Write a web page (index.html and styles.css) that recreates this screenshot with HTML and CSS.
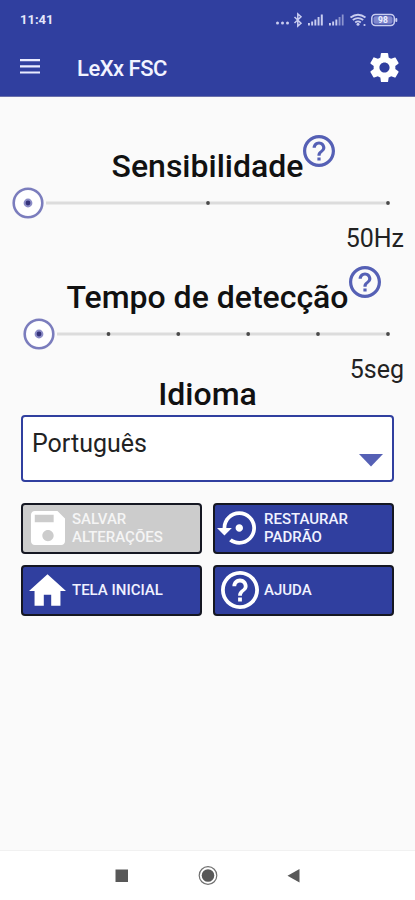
FILE: index.html
```html
<!DOCTYPE html>
<html lang="pt">
<head>
    <meta charset="UTF-8">
    <meta name="viewport" content="width=device-width, initial-scale=1.0">
    <title>LeXx FSC</title>
    <link rel="stylesheet" href="styles.css">
</head>
<body>
    <svg class="defs" aria-hidden="true">
        <symbol id="icon-help" viewBox="2 2 20 20">
            <path d="M11 18h2v-2h-2v2zm1-16C6.48 2 2 6.48 2 12s4.48 10 10 10 10-4.48 10-10S17.52 2 12 2zm0 18c-4.41 0-8-3.59-8-8s3.59-8 8-8 8 3.59 8 8-3.59 8-8 8zm0-14c-2.21 0-4 1.79-4 4h2c0-1.1.9-2 2-2s2 .9 2 2c0 2-3 1.75-3 5h2c0-2.25 3-2.5 3-5 0-2.21-1.79-4-4-4z"/>
        </symbol>
    </svg>

    <header class="app-header">
        <div class="status-bar">
            <span class="clock">11:41</span>
            <svg class="status-icons" width="124" height="16" viewBox="0 0 124 16">
                <g fill="#c9cdf0">
                    <circle cx="2.5" cy="11" r="1.5"/>
                    <circle cx="7.5" cy="11" r="1.5"/>
                    <circle cx="12.5" cy="11" r="1.5"/>
                    <path d="M33 11h1.9v2.5H33zM36.2 9.5h1.9v4h-1.9zM39.4 7.5h1.9v6h-1.9zM42.6 5h1.9v8.5h-1.9zM45.8 2.5h2v11h-2z"/>
                    <path d="M54 11h1.9v2.5H54zM57.2 9.5h1.9v4h-1.9zM60.4 7.5h1.9v6h-1.9z"/>
                    <path opacity=".6" d="M63.6 5h1.9v8.5h-1.9zM66.8 2.5h1.8v11h-1.8z"/>
                    <circle cx="83" cy="12.3" r="1.5"/>
                    <circle cx="89.5" cy="13" r="1.1"/>
                    <rect x="120.3" y="6" width="2" height="4" rx="1"/>
                </g>
                <g fill="none" stroke="#c9cdf0">
                    <path stroke-width="1.5" d="M19.5 5l6.500 6.2-3.200 2.800V2l3.200 2.800-6.500 6.2"/>
                    <path stroke-width="1.9" d="M75.500 5.600q7.500-5.600 15 0M77.800 8.100q5.200-3.900 10.400 0M80.200 10.400q2.800-2.100 5.600 0"/>
                    <rect x="96.8" y="2.5" width="22.5" height="11" rx="3.5" stroke-width="1.5"/>
                </g>
                <rect x="98.5" y="4.2" width="19" height="7.6" rx="2" fill="#7f87cd"/>
                <text x="108" y="11.2" class="battery-level">98</text>
            </svg>
        </div>
        <div class="toolbar">
            <svg class="menu-icon" width="20" height="15" viewBox="0 0 20 15">
                <path d="M0 0h20v2.2H0zM0 6.2h20v2.2H0zM0 12.4h20v2.2H0z" fill="#e9ebff"/>
            </svg>
            <h1 class="app-title">LeXx FSC</h1>
            <svg class="settings-icon" width="29" height="29" viewBox="2 2 20 20">
                <path fill="#fff" d="M19.43 12.98c.04-.32.07-.64.07-.98s-.03-.66-.07-.98l2.11-1.65c.19-.15.24-.42.12-.64l-2-3.46c-.12-.22-.39-.3-.61-.22l-2.49 1c-.52-.4-1.08-.73-1.69-.98l-.38-2.65C14.46 2.18 14.25 2 14 2h-4c-.25 0-.46.18-.49.42l-.38 2.65c-.61.25-1.17.59-1.69.98l-2.49-1c-.23-.09-.49 0-.61.22l-2 3.46c-.13.22-.07.49.12.64l2.11 1.65c-.04.32-.07.65-.07.98s.03.66.07.98l-2.11 1.65c-.19.15-.24.42-.12.64l2 3.46c.12.22.39.3.61.22l2.49-1c.52.4 1.08.73 1.69.98l.38 2.65c.03.24.24.42.49.42h4c.25 0 .46-.18.49-.42l.38-2.65c.61-.25 1.17-.59 1.69-.98l2.49 1c.23.09.49 0 .61-.22l2-3.46c.12-.22.07-.49-.12-.64l-2.11-1.65zM12 15.5c-1.93 0-3.5-1.57-3.5-3.5s1.57-3.5 3.5-3.5 3.5 1.57 3.5 3.5-1.57 3.5-3.5 3.5z"/>
            </svg>
        </div>
    </header>

    <main class="settings">
        <section class="setting">
            <div class="setting-title">
                <h2>Sensibilidade</h2>
                <svg class="help"><use href="#icon-help"/></svg>
            </div>
            <svg class="slider" viewBox="0 0 415 34">
                <path class="rail" d="M46 17h342"/>
                <g class="ticks">
                    <circle cx="208" cy="17" r="1.9"/>
                    <circle cx="388" cy="17" r="1.9"/>
                </g>
                <circle class="thumb" cx="28" cy="17" r="14.3"/>
                <circle class="thumb-center" cx="28" cy="17" r="3.4"/>
            </svg>
            <p class="value">50Hz</p>
        </section>

        <section class="setting">
            <div class="setting-title">
                <h2>Tempo de detecção</h2>
                <svg class="help"><use href="#icon-help"/></svg>
            </div>
            <svg class="slider" viewBox="0 0 415 34">
                <path class="rail" d="M57 17h331"/>
                <g class="ticks">
                    <circle cx="108.5" cy="17" r="1.9"/>
                    <circle cx="178.3" cy="17" r="1.9"/>
                    <circle cx="248.2" cy="17" r="1.9"/>
                    <circle cx="318" cy="17" r="1.9"/>
                    <circle cx="388" cy="17" r="1.9"/>
                </g>
                <circle class="thumb" cx="39" cy="17" r="14.3"/>
                <circle class="thumb-center" cx="39" cy="17" r="3.4"/>
            </svg>
            <p class="value">5seg</p>
        </section>

        <section class="language">
            <h2 class="language-title">Idioma</h2>
            <div class="select">
                <span class="select-text">Português</span>
                <svg class="arrow" width="24" height="13" viewBox="0 0 24 13"><path d="M0 0h24L12 12.5z"/></svg>
            </div>
        </section>

        <div class="actions">
            <button class="action" disabled>
                <svg class="action-icon" width="34" height="34" viewBox="3 3 18 18">
                    <path d="M17 3H5c-1.11 0-2 .9-2 2v14c0 1.1.89 2 2 2h14c1.1 0 2-.9 2-2V7l-4-4zm-5 16c-1.66 0-3-1.34-3-3s1.34-3 3-3 3 1.34 3 3-1.34 3-3 3zm3-10H5V5h10v4z"/>
                </svg>
                <span>SALVAR<br>ALTERAÇÕES</span>
            </button>
            <button class="action">
                <svg class="action-icon restore" width="39" height="34" viewBox="0 3 21 18">
                    <path d="M14 12c0-1.1-.9-2-2-2s-2 .9-2 2 .9 2 2 2 2-.9 2-2zm-2-9c-4.97 0-9 4.03-9 9H0l4 4 4-4H5c0-3.87 3.13-7 7-7s7 3.13 7 7-3.13 7-7 7c-1.51 0-2.91-.49-4.06-1.3l-1.42 1.44C8.04 20.3 9.94 21 12 21c4.97 0 9-4.03 9-9s-4.03-9-9-9z"/>
                </svg>
                <span>RESTAURAR<br>PADRÃO</span>
            </button>
            <button class="action">
                <svg class="action-icon" width="37" height="32" viewBox="2 3 20 17">
                    <path d="M10 20v-6h4v6h5v-8h3L12 3 2 12h3v8z"/>
                </svg>
                <span>TELA INICIAL</span>
            </button>
            <button class="action">
                <svg class="action-icon" width="38" height="38"><use href="#icon-help"/></svg>
                <span>AJUDA</span>
            </button>
        </div>
    </main>

    <nav class="system-nav">
        <svg width="22" height="22" viewBox="0 0 22 22"><path d="M4.500 4.500h12.500v12.500h-12.500z"/></svg>
        <svg width="22" height="22" viewBox="0 0 22 22">
            <circle cx="11" cy="10.5" r="6.3"/>
            <circle class="ring" cx="11" cy="10.5" r="8.800"/>
        </svg>
        <svg width="22" height="22" viewBox="0 0 22 22"><path d="M16.500 4v13.500L4.500 10.700z"/></svg>
    </nav>
</body>
</html>
```
FILE: styles.css
```css
:root {
    --primary: #303f9f;
    --accent: #5560b5;
    --background: #fafafa;
}

* {
    box-sizing: border-box;
}

body {
    display: flex;
    flex-direction: column;
    height: 900px;
    margin: 0;
    overflow: hidden;
    background: var(--background);
    color: #111;
    font-family: Roboto, sans-serif;
}

h1, h2, p {
    margin: 0;
    font-weight: 500;
    white-space: nowrap;
}

svg {
    display: block;
    flex: none;
}

.defs {
    position: absolute;
    width: 0;
    height: 0;
}

/* Header */
.app-header {
    height: 97px;
    background: var(--primary);
    border-bottom: 1px solid #6a70aa;
}

.status-bar {
    display: flex;
    justify-content: space-between;
    align-items: center;
    height: 39px;
    padding: 0 16px 0 20px;
}

.clock {
    color: #e4e6fb;
    font-size: 13px;
    font-weight: 700;
}

.battery-level {
    fill: #eef0ff;
    font-size: 8.5px;
    font-weight: 700;
    text-anchor: middle;
}

.toolbar {
    display: flex;
    align-items: center;
    height: 57px;
    padding: 0 16px 0 20px;
}

.menu-icon {
    margin-top: -2px;
}

.app-title {
    margin-top: 2px;
    margin-left: 37px;
    color: #f2f3ff;
    font-size: 22px;
    letter-spacing: -0.5px;
}

.settings-icon {
    margin-left: auto;
    margin-top: -1px;
}

/* Sliders */
.settings {
    flex: 1;
    padding-top: 37px;
}

.setting {
    height: 131.5px;
}

.setting + .setting .setting-title {
    margin-top: -0.5px;
}

.setting-title {
    display: flex;
    justify-content: center;
    height: 52px;
    padding-left: 32px;
}

.setting-title h2,
.language-title {
    font-size: 32px;
    line-height: 38px;
}

.setting-title h2 {
    padding-top: 13px;
}

.setting-title .help {
    width: 32px;
    height: 32px;
    margin-top: 1px;
    fill: var(--accent);
}

.slider {
    width: 415px;
    height: 34px;
}

.rail {
    stroke: #dcdcdc;
    stroke-width: 3;
}

.ticks {
    fill: #4a4a4a;
}

.thumb {
    fill: #fff;
    stroke: #7b7dbd;
    stroke-width: 2.6;
}

.thumb-center {
    fill: #35337a;
    stroke: #8b8cc6;
    stroke-width: 2;
}

.value {
    padding-right: 11px;
    color: #222;
    font-size: 25px;
    font-weight: 400;
    line-height: 37px;
    text-align: right;
}

/* Language */
.language {
    height: 128px;
    margin-top: -22px;
    padding: 0 21px;
}

.language-title {
    text-align: center;
}

.select {
    display: flex;
    justify-content: space-between;
    height: 67px;
    margin-top: 2px;
    padding: 9px 9px 0;
    background: #fff;
    border: 2px solid var(--primary);
    border-radius: 4px;
}

.select-text {
    color: #222;
    font-size: 25px;
    line-height: 36px;
}

.arrow {
    margin-top: 28px;
    fill: var(--accent);
}

/* Buttons */
.actions {
    display: grid;
    grid-template-columns: 1fr 1fr;
    grid-auto-rows: 51px;
    gap: 11px;
    padding: 0 21px;
}

.action {
    display: grid;
    grid-template-columns: 49px 1fr;
    align-items: center;
    padding: 0;
    background: var(--primary);
    border: 2px solid #151722;
    border-radius: 4px;
    color: #f0f2ff;
    font: 500 15px/18px Roboto, sans-serif;
    text-align: left;
}

.action:disabled {
    background: #ccc;
    color: #f5f5f5;
}

.action-icon {
    justify-self: center;
    fill: #fff;
}

.action-icon.restore {
    margin-left: -6px;
}

/* Android navigation */
.system-nav {
    display: flex;
    justify-content: center;
    align-items: center;
    gap: 64px;
    height: 50px;
    background: #fff;
    border-top: 1px solid #f1f1f1;
    fill: #585858;
}

.system-nav .ring {
    fill: none;
    stroke: #707070;
    stroke-width: 1.2;
}
```
